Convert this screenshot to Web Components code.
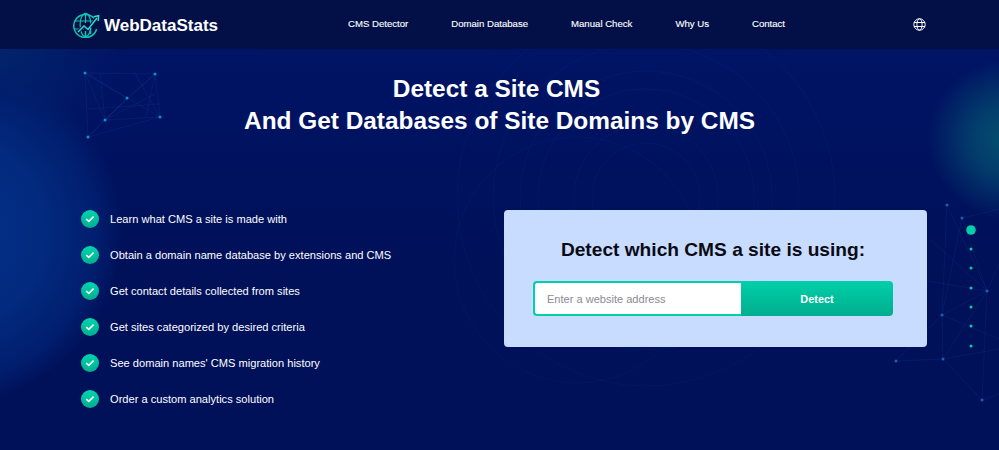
<!DOCTYPE html>
<html lang="en">
<head>
<meta charset="utf-8">
<title>WebDataStats</title>
<style>
  html, body { margin: 0; padding: 0; background: #001059; }
  body { width: 999px; height: 450px; overflow: hidden; font-family: "Liberation Sans", Arial, sans-serif; }
</style>
</head>
<body>
<wds-page>
  <wds-header slot="header"></wds-header>
  <wds-hero slot="hero">
    <span slot="line1">Detect a Site CMS</span>
    <span slot="line2">And Get Databases of Site Domains by CMS</span>
    <check-list slot="left">
      <check-item>Learn what CMS a site is made with</check-item>
      <check-item>Obtain a domain name database by extensions and CMS</check-item>
      <check-item>Get contact details collected from sites</check-item>
      <check-item>Get sites categorized by desired criteria</check-item>
      <check-item>See domain names' CMS migration history</check-item>
      <check-item>Order a custom analytics solution</check-item>
    </check-list>
    <detect-card slot="right"></detect-card>
  </wds-hero>
</wds-page>

<script>
class WdsPage extends HTMLElement {
  constructor() {
    super();
    this.attachShadow({ mode: 'open' });
  }
  connectedCallback() {
    this.shadowRoot.innerHTML = `
      <style>
        :host { display: flex; flex-direction: column; width: 999px; height: 450px; }
      </style>
      <slot name="header"></slot>
      <slot name="hero"></slot>
    `;
  }
}

class WdsHeader extends HTMLElement {
  constructor() {
    super();
    this.attachShadow({ mode: 'open' });
  }
  connectedCallback() {
    this.shadowRoot.innerHTML = `
      <style>
        :host { display: flex; align-items: center; height: 49px; box-sizing: border-box; padding: 0 73px 0 73px; background: #021047; color: #fff; }
        #logo { display: flex; align-items: center; gap: 4px; width: 275px; }
        #logo svg { display: block; }
        #logo-text { font-size: 17px; font-weight: 700; position: relative; top: 1px; }
        nav { display: flex; gap: 43px; font-size: 9.6px; -webkit-text-stroke: 0.12px #fff; position: relative; top: -1px; }
        nav a { color: #fff; text-decoration: none; white-space: nowrap; }
        #lang { margin-left: auto; display: block; }
      </style>
      <div id="logo">
        <svg width="27" height="26" viewBox="0 0 27 26" fill="none" stroke="#12c4b4" stroke-width="1.5">
          <path d="M21 6.2A11.6 11.6 0 1 0 23.6 17"/>
          <ellipse cx="12.5" cy="13" rx="5.4" ry="11.6" stroke-width="1.2"/>
          <path d="M1.6 9H20M1.6 17H11M12.5 1.5V11" stroke-width="1.2"/>
          <path d="M5 20L11 14L15 17.5L24 6" stroke="#021047" stroke-width="3.4"/>
          <path d="M5 20L11 14L15 17.5L24 6" stroke="#2ddccb" stroke-width="1.5"/>
          <path d="M20.5 4.8L25.6 3.8L25.2 9" stroke="#2ddccb" stroke-width="1.5"/>
          <path d="M12.5 24V19M17.5 22V15.5" stroke-width="1.5"/>
        </svg>
        <span id="logo-text">WebDataStats</span>
      </div>
      <nav>
        <a href="#">CMS Detector</a>
        <a href="#">Domain Database</a>
        <a href="#">Manual Check</a>
        <a href="#">Why Us</a>
        <a href="#">Contact</a>
      </nav>
      <svg id="lang" width="13" height="13" viewBox="0 0 13 13" fill="none" stroke="#fff" stroke-width="1">
        <circle cx="6.5" cy="6.5" r="5.7"/>
        <ellipse cx="6.5" cy="6.5" rx="2.6" ry="5.7"/>
        <path d="M1 4.5H12M1 8.5H12"/>
      </svg>
    `;
  }
}

class WdsHero extends HTMLElement {
  constructor() {
    super();
    this.attachShadow({ mode: 'open' });
  }
  connectedCallback() {
    this.shadowRoot.innerHTML = `
      <style>
        :host { display: block; position: relative; height: 401px; overflow: hidden; color: #fff;
          background:
            radial-gradient(circle 80px at 1008px 90px, #04506f 0%, #033c6c 45%, rgba(1,20,99,0) 100%),
            radial-gradient(circle 175px at -52px 183px, #03338c 0%, #022a7e 55%, #011e6e 85%, rgba(0,16,89,0) 100%),
            radial-gradient(circle 120px at 0px 0px, #02246c 0%, rgba(0,16,89,0) 100%),
            linear-gradient(#001465 0%, #001059 55%, #001059 100%); }
        #backdrop { position: absolute; left: 0; top: 0; display: block; }
        #content { position: relative; display: flex; flex-direction: column; }
        h1 { margin: 24px 0 0 0; font-size: 24.4px; line-height: 32px; font-weight: 700; text-align: center; }
        h1 span { display: block; }
        h1 span:first-child { padding-right: 6px; }
        #columns { display: flex; justify-content: space-between; align-items: flex-start; padding: 0 72px 0 81px; margin-top: 73px; }
      </style>
      <svg id="backdrop" width="999" height="401" viewBox="0 0 999 401" fill="none">
        <g stroke="#2c5bc0" stroke-opacity=".08" stroke-width="1">
          <circle cx="646" cy="148" r="54"/>
          <circle cx="646" cy="148" r="72"/>
          <circle cx="646" cy="148" r="108"/>
          <circle cx="646" cy="148" r="126"/>
          <circle cx="646" cy="148" r="153"/>
          <circle cx="646" cy="148" r="189"/>
          <circle cx="577" cy="211" r="123"/>
        </g>
        <g stroke="#1d50b0" stroke-opacity=".24" stroke-width=".7">
          <path d="M85 24L155 25L160 68L88 88Z"/>
          <path d="M85 24L105 71L127 49L155 25M85 24L127 49M85 24L160 68M155 25L105 71M155 25L146 68M105 71L160 68M105 71L88 88M105 71L155 45M88 88L127 49M100 24L105 71M135 24L160 68M88 60L160 55"/>
        </g>
        <g fill="#0f8fd0">
          <circle cx="85" cy="24" r="1.5"/><circle cx="155" cy="25" r="1.5"/>
          <circle cx="127" cy="49" r="1.5"/><circle cx="105" cy="71" r="1.5"/>
          <circle cx="160" cy="68" r="1.5"/><circle cx="88" cy="88" r="1.5"/>
        </g>
        <g stroke="#1d50b0" stroke-opacity=".24" stroke-width=".7">
          <path d="M947 156L987 242L942 266L896 312L943 310L987 242M962 169L987 242M962 169L942 266M947 156L942 266M942 266L943 310M943 310L999 300M943 310L982 351L999 345M942 266L999 290M987 242L999 215M930 190L987 242M962 169L999 160M987 242L982 351M915 230L987 242"/>
        </g>
        <g fill="#1a5fb8">
          <circle cx="947" cy="156" r="1.5"/><circle cx="962" cy="169" r="1.5"/>
          <circle cx="987" cy="242" r="1.5"/><circle cx="942" cy="266" r="1.5"/>
          <circle cx="896" cy="312" r="1.5"/><circle cx="943" cy="310" r="1.5"/>
          <circle cx="982" cy="351" r="1.5"/>
        </g>
        <g fill="#00cfa9">
          <circle cx="971" cy="181" r="4.8"/>
          <circle cx="971" cy="200" r="1.5"/><circle cx="971" cy="219" r="1.5"/>
          <circle cx="971" cy="239" r="1.5"/><circle cx="971" cy="258" r="1.5"/>
          <circle cx="971" cy="277" r="1.5"/><circle cx="971" cy="297" r="1.5"/>
        </g>
      </svg>
      <div id="content">
        <h1><span><slot name="line1"></slot></span><span><slot name="line2"></slot></span></h1>
        <div id="columns">
          <slot name="left"></slot>
          <slot name="right"></slot>
        </div>
      </div>
    `;
  }
}

class CheckList extends HTMLElement {
  constructor() {
    super();
    this.attachShadow({ mode: 'open' });
  }
  connectedCallback() {
    this.shadowRoot.innerHTML = `
      <style>
        :host { display: flex; flex-direction: column; gap: 18px; }
      </style>
      <slot></slot>
    `;
  }
}

class CheckItem extends HTMLElement {
  constructor() {
    super();
    this.attachShadow({ mode: 'open' });
  }
  connectedCallback() {
    this.shadowRoot.innerHTML = `
      <style>
        :host { display: flex; align-items: center; gap: 11px; height: 18px; font-size: 11.1px; color: #fff; white-space: nowrap; }
        #tick { display: flex; align-items: center; justify-content: center; width: 18px; height: 18px; border-radius: 50%; background: linear-gradient(#00d4b0, #00ae8e); flex: none; }
        #tick svg { display: block; }
      </style>
      <span id="tick">
        <svg width="10" height="8" viewBox="0 0 10 8" fill="none" stroke="#fff" stroke-width="1.6"><path d="M1.2 4.2L3.8 6.4L8.6 1.6"/></svg>
      </span>
      <span><slot></slot></span>
    `;
  }
}

class DetectCard extends HTMLElement {
  constructor() {
    super();
    this.attachShadow({ mode: 'open' });
  }
  connectedCallback() {
    this.shadowRoot.innerHTML = `
      <style>
        :host { display: flex; flex-direction: column; align-items: center; box-sizing: border-box; width: 423px; height: 137px; padding: 0 34px 0 29px; border-radius: 4px; background: #c8dcff; color: #0a0a14; }
        h2 { margin: 28px 0 0 0; font-size: 19.15px; line-height: 24px; font-weight: 700; white-space: nowrap; }
        form { display: flex; width: 360px; height: 35px; margin-top: 19px; }
        input { box-sizing: border-box; width: 208px; height: 35px; margin: 0; padding: 0 12px; border: 2px solid #00cfa9; border-right: 0; border-radius: 4px 0 0 4px; background: #fff; outline: none; font: 11.05px "Liberation Sans", Arial, sans-serif; color: #333; }
        input::placeholder { color: #8a8a94; opacity: 1; }
        button { width: 152px; height: 35px; margin: 0; padding: 0; border: 0; border-radius: 0 4px 4px 0; background: linear-gradient(#00cfa9, #00ae8e); color: #fff; font: 700 10.9px "Liberation Sans", Arial, sans-serif; cursor: pointer; }
      </style>
      <h2>Detect which CMS a site is using:</h2>
      <form onsubmit="return false">
        <input type="text" placeholder="Enter a website address">
        <button type="button">Detect</button>
      </form>
    `;
  }
}

customElements.define('wds-page', WdsPage);
customElements.define('wds-header', WdsHeader);
customElements.define('wds-hero', WdsHero);
customElements.define('check-list', CheckList);
customElements.define('check-item', CheckItem);
customElements.define('detect-card', DetectCard);
</script>
</body>
</html>
